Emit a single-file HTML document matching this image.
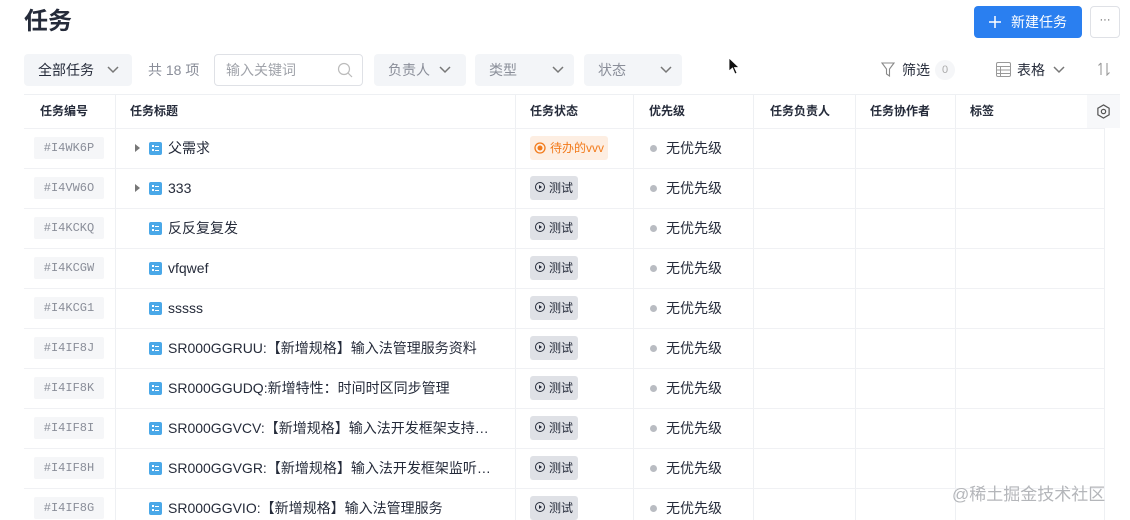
<!DOCTYPE html>
<html><head><meta charset="utf-8"><style>
*{margin:0;padding:0;box-sizing:border-box}
body{width:1130px;height:520px;overflow:hidden;background:#fff;font-family:"Liberation Sans","Noto Sans CJK SC",sans-serif;color:#252b3a;position:relative}
.a{position:absolute}
.sel{position:absolute;top:54px;height:32px;background:#f3f5f8;border-radius:4px;font-size:14px;line-height:32px;color:#8a8e99;padding-left:14px}
.chev{position:absolute;top:10px;width:14px;height:12px}
.hd{position:absolute;top:95px;height:33px;font-size:12px;font-weight:bold;line-height:33px;color:#252b3a}
.vl{position:absolute;width:1px;background:#eef0f3}
.hl{position:absolute;left:24px;width:1080px;height:1px;background:#f0f1f4}
.id{position:absolute;left:34px;width:70px;height:22px;background:#f5f6f8;border-radius:2px;font-family:"Liberation Mono","DejaVu Sans Mono",monospace;font-size:12px;color:#8a8e99;line-height:22px;text-align:center}
.ti{position:absolute;left:168px;font-size:14px;line-height:20px;color:#252b3a}
.ic{position:absolute;left:149px;width:13px;height:13px;background:#4aa8e8;border-radius:2px}
.ic:before{content:"";position:absolute;left:3px;top:3px;width:2px;height:2px;background:#fff;box-shadow:0 4px 0 #fff}
.ic:after{content:"";position:absolute;left:6px;top:3.5px;width:4px;height:1px;background:#fff;box-shadow:0 4px 0 #fff}
.ar{position:absolute;left:135px;width:0;height:0;border-left:5px solid #777;border-top:4px solid transparent;border-bottom:4px solid transparent}
.st{position:absolute;left:530px;width:48px;height:24px;background:#dfe1e6;border-radius:3px;font-size:12px;line-height:24px;padding-left:19px;color:#252b3a}
.st:before{content:"";position:absolute;left:5px;top:6px;width:10px;height:10px;border:1.5px solid #252b3a;border-radius:50%;box-sizing:border-box}
.st:after{content:"";position:absolute;left:9px;top:9px;border-left:3px solid #252b3a;border-top:2.5px solid transparent;border-bottom:2.5px solid transparent}
.pr{position:absolute;left:666px;font-size:14px;line-height:20px}
.dot{position:absolute;left:650px;width:7px;height:7px;border-radius:50%;background:#b9bcc2}
</style></head><body>
<div class="a" style="left:24px;top:5px;font-size:24px;font-weight:bold;color:#252b3a;line-height:34px">任务</div>
<div class="a" style="left:974px;top:6px;width:108px;height:32px;background:#2a7ff0;border-radius:4px;color:#fff;font-size:14px;line-height:32px;padding-left:37px">新建任务</div>
<svg class="a" style="left:988px;top:15px" width="14" height="14"><path d="M7 1V13M1 7H13" stroke="#fff" stroke-width="1.5"/></svg>
<div class="a" style="left:1090px;top:6px;width:30px;height:32px;border:1px solid #dfe1e6;border-radius:4px;text-align:center;font-size:11px;line-height:26px;color:#555">···</div>

<div class="sel" style="left:24px;width:108px;color:#252b3a">全部任务<svg class="chev" style="left:82px" viewBox="0 0 14 12"><path d="M2 3L7 8L12 3" stroke="#777" stroke-width="1.5" fill="none"/></svg></div>
<div class="a" style="left:148px;top:54px;font-size:14px;line-height:32px;color:#8a8e99">共 18 项</div>
<div class="a" style="left:214px;top:54px;width:149px;height:32px;border:1px solid #dfe1e6;border-radius:4px;font-size:14px;line-height:30px;color:#a0a3aa;padding-left:11px">输入关键词</div>
<svg class="a" style="left:337px;top:62px" width="16" height="16"><circle cx="7" cy="7" r="5.5" stroke="#bbb" stroke-width="1.2" fill="none"/><path d="M11 11L15 15" stroke="#bbb" stroke-width="1.2"/></svg>
<div class="sel" style="left:374px;width:92px">负责人<svg class="chev" style="left:64px" viewBox="0 0 14 12"><path d="M2 3L7 8L12 3" stroke="#777" stroke-width="1.5" fill="none"/></svg></div>
<div class="sel" style="left:475px;width:99px">类型<svg class="chev" style="left:76px" viewBox="0 0 14 12"><path d="M2 3L7 8L12 3" stroke="#777" stroke-width="1.5" fill="none"/></svg></div>
<div class="sel" style="left:584px;width:98px">状态<svg class="chev" style="left:75px" viewBox="0 0 14 12"><path d="M2 3L7 8L12 3" stroke="#777" stroke-width="1.5" fill="none"/></svg></div>
<svg class="a" style="left:728px;top:57px" width="12" height="18"><path d="M1 1V14L4.5 11L7 17L9 16L6.5 10.5H11Z" fill="#111" stroke="#fff" stroke-width="0.8"/></svg>

<svg class="a" style="left:881px;top:62px" width="14" height="15"><path d="M1 1H13L8.5 7V14L5.5 12V7Z" stroke="#888" stroke-width="1.1" fill="none"/></svg>
<div class="a" style="left:902px;top:54px;font-size:14px;line-height:32px;color:#252b3a">筛选</div>
<div class="a" style="left:935px;top:60px;width:20px;height:20px;border-radius:10px;background:#f5f6f8;font-size:11px;color:#aaa;line-height:20px;text-align:center">0</div>
<svg class="a" style="left:996px;top:62px" width="15" height="15"><rect x="0.5" y="0.5" width="14" height="14" rx="1.5" stroke="#999" fill="none"/><path d="M0.5 4.5H14.5M0.5 8H14.5M0.5 11.5H14.5M4.5 4.5V14.5" stroke="#999"/></svg>
<div class="a" style="left:1017px;top:54px;font-size:14px;line-height:32px;color:#252b3a">表格</div>
<svg class="a" style="left:1052px;top:64px" width="14" height="12"><path d="M2 3L7 8L12 3" stroke="#777" stroke-width="1.5" fill="none"/></svg>
<svg class="a" style="left:1097px;top:62px" width="14" height="14"><path d="M4 1V13M4 1L1.5 3.5M10 1V13L12.5 10.5" stroke="#999" stroke-width="1.1" fill="none"/></svg>

<div class="a" style="left:24px;top:94px;width:1096px;height:1px;background:#eef0f3"></div>
<div class="a" style="left:1087px;top:95px;width:33px;height:33px;background:#f7f8fa"></div>
<svg class="a" style="left:1096px;top:104px" width="15" height="15" viewBox="0 0 16 16"><path d="M8 1L14 4.5V11.5L8 15L2 11.5V4.5Z" stroke="#555" stroke-width="1.3" fill="none"/><circle cx="8" cy="8" r="2.3" stroke="#555" stroke-width="1.3" fill="none"/></svg>
<div class="hd" style="left:40px">任务编号</div>
<div class="hd" style="left:130px">任务标题</div>
<div class="hd" style="left:530px">任务状态</div>
<div class="hd" style="left:649px">优先级</div>
<div class="hd" style="left:770px">任务负责人</div>
<div class="hd" style="left:870px">任务协作者</div>
<div class="hd" style="left:970px">标签</div>

<div class="vl" style="left:115px;top:95px;height:425px"></div>
<div class="vl" style="left:515px;top:95px;height:425px"></div>
<div class="vl" style="left:633px;top:95px;height:425px"></div>
<div class="vl" style="left:753px;top:95px;height:425px"></div>
<div class="vl" style="left:855px;top:95px;height:425px"></div>
<div class="vl" style="left:955px;top:95px;height:425px"></div>
<div class="vl" style="left:1104px;top:128px;height:392px"></div>

<div class="hl" style="top:128px"></div><div class="hl" style="top:168px"></div><div class="hl" style="top:208px"></div><div class="hl" style="top:248px"></div><div class="hl" style="top:288px"></div><div class="hl" style="top:328px"></div><div class="hl" style="top:368px"></div><div class="hl" style="top:408px"></div><div class="hl" style="top:448px"></div><div class="hl" style="top:488px"></div>

<!-- row 1 -->
<div class="id" style="top:137px">#I4WK6P</div><div class="ar" style="top:144px"></div><div class="ic" style="top:142px"></div><div class="ti" style="top:138px">父需求</div>
<div class="a" style="left:530px;top:136px;width:78px;height:24px;background:#fdeee2;border-radius:3px;font-size:12px;line-height:24px;color:#f27a1a;padding-left:20px">待办的vvv</div>
<svg class="a" style="left:534px;top:142px" width="12" height="12"><circle cx="6" cy="6" r="5" stroke="#f27a1a" stroke-width="1.3" fill="none"/><circle cx="6" cy="6" r="2.5" fill="#f27a1a"/></svg>
<div class="dot" style="top:145px"></div><div class="pr" style="top:138px">无优先级</div>
<!-- row 2 -->
<div class="id" style="top:177px">#I4VW6O</div><div class="ar" style="top:184px"></div><div class="ic" style="top:182px"></div><div class="ti" style="top:178px">333</div>
<div class="st" style="top:176px">测试</div><div class="dot" style="top:185px"></div><div class="pr" style="top:178px">无优先级</div>
<!-- row 3 -->
<div class="id" style="top:217px">#I4KCKQ</div><div class="ic" style="top:222px"></div><div class="ti" style="top:218px">反反复复发</div>
<div class="st" style="top:216px">测试</div><div class="dot" style="top:225px"></div><div class="pr" style="top:218px">无优先级</div>
<!-- row 4 -->
<div class="id" style="top:257px">#I4KCGW</div><div class="ic" style="top:262px"></div><div class="ti" style="top:258px">vfqwef</div>
<div class="st" style="top:256px">测试</div><div class="dot" style="top:265px"></div><div class="pr" style="top:258px">无优先级</div>
<!-- row 5 -->
<div class="id" style="top:297px">#I4KCG1</div><div class="ic" style="top:302px"></div><div class="ti" style="top:298px">sssss</div>
<div class="st" style="top:296px">测试</div><div class="dot" style="top:305px"></div><div class="pr" style="top:298px">无优先级</div>
<!-- row 6 -->
<div class="id" style="top:337px">#I4IF8J</div><div class="ic" style="top:342px"></div><div class="ti" style="top:338px">SR000GGRUU:【新增规格】输入法管理服务资料</div>
<div class="st" style="top:336px">测试</div><div class="dot" style="top:345px"></div><div class="pr" style="top:338px">无优先级</div>
<!-- row 7 -->
<div class="id" style="top:377px">#I4IF8K</div><div class="ic" style="top:382px"></div><div class="ti" style="top:378px">SR000GGUDQ:新增特性：时间时区同步管理</div>
<div class="st" style="top:376px">测试</div><div class="dot" style="top:385px"></div><div class="pr" style="top:378px">无优先级</div>
<!-- row 8 -->
<div class="id" style="top:417px">#I4IF8I</div><div class="ic" style="top:422px"></div><div class="ti" style="top:418px">SR000GGVCV:【新增规格】输入法开发框架支持…</div>
<div class="st" style="top:416px">测试</div><div class="dot" style="top:425px"></div><div class="pr" style="top:418px">无优先级</div>
<!-- row 9 -->
<div class="id" style="top:457px">#I4IF8H</div><div class="ic" style="top:462px"></div><div class="ti" style="top:458px">SR000GGVGR:【新增规格】输入法开发框架监听…</div>
<div class="st" style="top:456px">测试</div><div class="dot" style="top:465px"></div><div class="pr" style="top:458px">无优先级</div>
<!-- row 10 -->
<div class="id" style="top:497px">#I4IF8G</div><div class="ic" style="top:502px"></div><div class="ti" style="top:498px">SR000GGVIO:【新增规格】输入法管理服务</div>
<div class="st" style="top:496px">测试</div><div class="dot" style="top:505px"></div><div class="pr" style="top:498px">无优先级</div>

<div class="a" style="left:952px;top:483px;font-size:17px;color:#b4b6ba;line-height:24px">@稀土掘金技术社区</div>
</body></html>
